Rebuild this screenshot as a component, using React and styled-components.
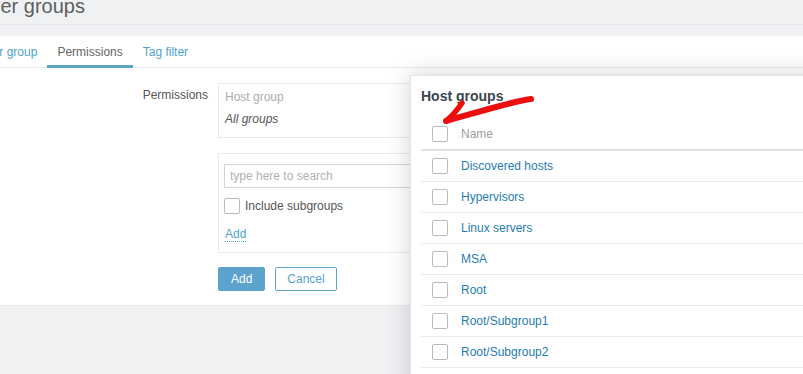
import React from "react";
import styled, { createGlobalStyle } from "styled-components";

const Global = createGlobalStyle`
  html, body { margin: 0; padding: 0; }
  body {
    background: #f0f1f3;
    font-family: "Liberation Sans", Arial, sans-serif;
    font-size: 12px;
    color: #555;
  }
`;

const Page = styled.div`
  position: relative;
  width: 803px;
  height: 374px;
  overflow: hidden;
  background: #f0f1f3;
`;

const Header = styled.header`
  display: flow-root;
  height: 25px;
  border-bottom: 1px solid #e3e5e8;
  box-sizing: border-box;
`;

const Title = styled.h1`
  margin: -4px 0 0 -24px;
  font-size: 20px;
  line-height: 20px;
  font-weight: normal;
  color: #5d5f61;
  white-space: nowrap;
`;

const Main = styled.main`
  padding-top: 11px;
`;

const Panel = styled.section`
  background: #fff;
  border-bottom: 1px solid #e6e8ea;
  padding-bottom: 14px;
`;

const Tabs = styled.nav`
  display: flex;
  height: 31px;
  margin-left: -32px;
  border-bottom: 1px solid #e8ebed;
`;

const Tab = styled.a`
  display: flex;
  align-items: center;
  box-sizing: border-box;
  height: 32px;
  padding: 2px 10px 0;
  margin-bottom: -1px;
  border-bottom: 3px solid ${(p) => (p.$active ? "#5aa6c2" : "transparent")};
  color: ${(p) => (p.$active ? "#666" : "#4fa3c9")};
  white-space: nowrap;
`;

const Form = styled.div`
  padding-top: 15px;
  display: flex;
  flex-direction: column;
`;

const FormRow = styled.div`
  display: flex;
  gap: 10px;
`;

const Label = styled.div`
  width: 208px;
  text-align: right;
  padding-top: 5px;
  line-height: 14px;
  color: #555;
`;

const Field = styled.div`
  display: flex;
  flex-direction: column;
  gap: 15px;
`;

const Box = styled.div`
  width: 560px;
  border: 1px solid #e8ebed;
  display: flex;
  flex-direction: column;
  align-items: flex-start;
  padding: ${(p) => p.$pad};
`;

const BoxHead = styled.div`
  line-height: 14px;
  color: #a9adb0;
`;

const BoxItalic = styled.div`
  line-height: 14px;
  margin-top: 8px;
  font-style: italic;
  color: #555;
`;

const SearchInput = styled.input`
  box-sizing: border-box;
  width: 320px;
  height: 24px;
  border: 1px solid #cfd5d9;
  padding: 0 5px;
  font-family: inherit;
  font-size: 12px;
  color: #555;
  outline: none;
  &::placeholder { color: #aeb2b5; }
`;

const CheckLine = styled.label`
  display: flex;
  align-items: center;
  gap: 5px;
  margin-top: 10px;
  color: #555;
  line-height: 16px;
`;

const Check = styled.span`
  display: inline-block;
  box-sizing: border-box;
  width: 16px;
  height: 16px;
  border: 1px solid #b6bcc0;
  border-radius: 2px;
  background: #fff;
  flex: none;
`;

const DottedLink = styled.a`
  margin-top: 13px;
  margin-left: 1px;
  line-height: 14px;
  color: #4fa3c9;
  border-bottom: 1px dotted #4fa3c9;
`;

const Buttons = styled.div`
  display: flex;
  gap: 10px;
  margin-top: 14px;
  margin-left: 218px;
`;

const Button = styled.button`
  box-sizing: border-box;
  height: 24px;
  padding: 0 ${(p) => (p.$primary ? "12px" : "11px")};
  border-radius: 2px;
  font-family: inherit;
  font-size: 12px;
  border: 1px solid #5ba3cb;
  background: ${(p) => (p.$primary ? "#5ba3cd" : "#fff")};
  color: ${(p) => (p.$primary ? "#fff" : "#5ba3cb")};
`;

const Modal = styled.div`
  position: absolute;
  left: 410px;
  top: 75px;
  width: 420px;
  height: 330px;
  background: #fff;
  border: 1px solid #e2e5e8;
  box-shadow: 0 0 22px rgba(40, 55, 70, 0.22);
  padding: 12px 0 0 10px;
  box-sizing: border-box;
`;

const ModalTitle = styled.h2`
  margin: 0 0 14px;
  font-size: 14px;
  line-height: 17px;
  font-weight: bold;
  color: #3a4650;
`;

const Table = styled.div`
  display: flex;
  flex-direction: column;
`;

const Row = styled.div`
  display: flex;
  align-items: center;
  gap: 13px;
  box-sizing: border-box;
  height: ${(p) => (p.$head ? "32px" : "31px")};
  padding-left: 11px;
  border-bottom: ${(p) => (p.$head ? "2px solid #dde1e4" : "1px solid #e8ebed")};
`;

const HeadCell = styled.span`
  color: #9a9fa3;
`;

const GroupLink = styled.a`
  color: #1f7dab;
`;

const Annotation = styled.svg`
  position: absolute;
  left: 0;
  top: 0;
  pointer-events: none;
`;

const groups = [
  "Discovered hosts",
  "Hypervisors",
  "Linux servers",
  "MSA",
  "Root",
  "Root/Subgroup1",
  "Root/Subgroup2",
];

export default function App() {
  return (
    <>
      <Global />
      <Page>
        <Header>
          <Title>User groups</Title>
        </Header>
        <Main>
          <Panel>
            <Tabs>
              <Tab>User group</Tab>
              <Tab $active>Permissions</Tab>
              <Tab>Tag filter</Tab>
            </Tabs>
            <Form>
              <FormRow>
                <Label>Permissions</Label>
                <Field>
                  <Box $pad="6px 6px 11px">
                    <BoxHead>Host group</BoxHead>
                    <BoxItalic>All groups</BoxItalic>
                  </Box>
                  <Box $pad="10px 5px 10px">
                    <SearchInput placeholder="type here to search" />
                    <CheckLine>
                      <Check />
                      Include subgroups
                    </CheckLine>
                    <DottedLink>Add</DottedLink>
                  </Box>
                </Field>
              </FormRow>
              <Buttons>
                <Button $primary>Add</Button>
                <Button>Cancel</Button>
              </Buttons>
            </Form>
          </Panel>
        </Main>
        <Modal>
          <ModalTitle>Host groups</ModalTitle>
          <Table>
            <Row $head>
              <Check />
              <HeadCell>Name</HeadCell>
            </Row>
            {groups.map((g) => (
              <Row key={g}>
                <Check />
                <GroupLink>{g}</GroupLink>
              </Row>
            ))}
          </Table>
        </Modal>
        <Annotation width="803" height="374" viewBox="0 0 803 374">
          <path
            d="M531 99 C 518 100, 488 109, 446 121"
            fill="none"
            stroke="#ec0f0f"
            strokeWidth="6"
            strokeLinecap="round"
          />
          <path
            d="M462 103 C 458 109, 452 116, 446 121"
            fill="none"
            stroke="#ec0f0f"
            strokeWidth="5.5"
            strokeLinecap="round"
          />
        </Annotation>
      </Page>
    </>
  );
}
